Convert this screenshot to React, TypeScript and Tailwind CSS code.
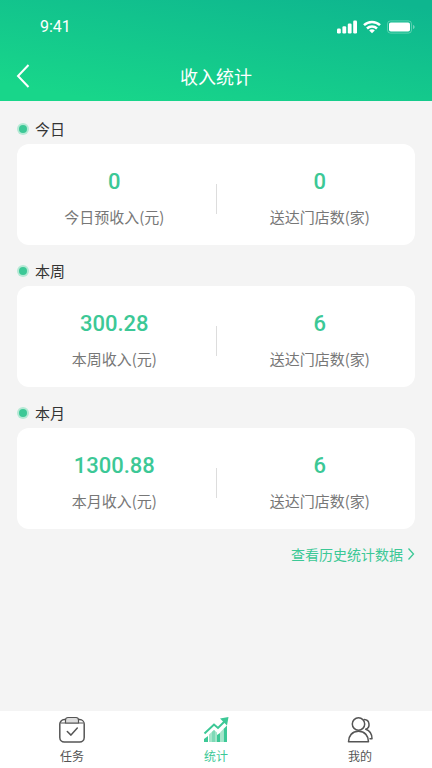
import type { ReactNode } from 'react';

const sections = [
  {
    title: '今日',
    income: '0',
    incomeLabel: '今日预收入(元)',
    stores: '0',
  },
  {
    title: '本周',
    income: '300.28',
    incomeLabel: '本周收入(元)',
    stores: '6',
  },
  {
    title: '本月',
    income: '1300.88',
    incomeLabel: '本月收入(元)',
    stores: '6',
  },
];

function StatusIcons() {
  return (
    <div className="flex items-center gap-[6px] text-white">
      <svg width="20" height="14" viewBox="0 0 20 14" fill="currentColor">
        <rect x="0" y="8.5" width="3.8" height="5" rx="1.2" />
        <rect x="5.4" y="6.3" width="3.8" height="7.2" rx="1.2" />
        <rect x="10.8" y="3.5" width="3.8" height="10" rx="1.2" />
        <rect x="16.2" y="0.5" width="3.8" height="13" rx="1.2" />
      </svg>
      <svg width="18" height="14" viewBox="0 0 18 14" fill="none" stroke="currentColor" strokeWidth="2.5">
        <path d="M1 5.1a11.6 11.6 0 0 1 16 0" />
        <path d="M4 8.5a7.2 7.2 0 0 1 10 0" />
        <path d="M9 13.2 6.2 10.5a3.8 3.8 0 0 1 5.6 0z" fill="currentColor" stroke="none" />
      </svg>
      <svg width="28" height="14" viewBox="0 0 28 14" fill="currentColor">
        <rect x="0.5" y="0.9" width="24" height="12.2" rx="3" fill="none" stroke="currentColor" strokeOpacity="0.3" />
        <rect x="2" y="2.5" width="21" height="9" rx="1.8" />
        <path d="M26 5v4c1-.4 1.6-1.1 1.6-2S27 5.4 26 5z" fillOpacity="0.4" />
      </svg>
    </div>
  );
}

function TaskIcon() {
  return (
    <svg width="28" height="28" viewBox="0 0 28 28" fill="none" stroke="currentColor" strokeWidth="1.5" strokeLinecap="round" strokeLinejoin="round">
      <rect x="1.8" y="3.6" width="24.4" height="22.4" rx="4.5" />
      <path d="M3 7h22" strokeWidth="1" />
      <path d="M7.5 7V4A2.5 2.5 0 0 1 10 1.500h8A2.5 2.5 0 0 1 20.5 4v3z" fill="#dddddd" strokeWidth="1.2" />
      <path d="m9.3 15.5 3.7 3.6 6.3-7" />
    </svg>
  );
}

function StatsIcon() {
  return (
    <svg width="28" height="28" viewBox="0 0 28 28" fill="none">
      <path d="M2 26v-3l4-3v6z" fill="#3cc896" />
      <path d="M7 26v-7.5l5-4.5 3 2.5V26z" fill="#a5e5ca" />
      <path d="M10 26V16l2-2 1 1v11z" fill="#7fd9b7" />
      <path d="M15 26v-7l3-2v9z" fill="#3cc896" />
      <path d="M18 26v-9.5l3-3V26z" fill="#a5e5ca" />
      <path d="M21.5 26V13L25 9.5V26z" fill="#3cc896" />
      <path d="m2.5 17.5 9.500-9 4 3.5 7-7" stroke="#3cc896" strokeWidth="2" />
      <path d="M18 2.5 26.5 1 25 9.5z" fill="#3cc896" />
    </svg>
  );
}

function MineIcon() {
  return (
    <svg width="28" height="28" viewBox="0 0 28 28" fill="none" stroke="currentColor" strokeWidth="1.5" strokeLinecap="round" strokeLinejoin="round">
      <circle cx="12.5" cy="8" r="6.2" />
      <path d="M2.5 25.8c0-5.8 3.6-10.5 10-10.5s10 4.7 10 10.5z" />
      <path d="M18.3 3.5a5 5 0 0 1 1.4 9.7c3.8 1.2 6.300 4.6 6.300 9.6h-2" />
    </svg>
  );
}

function Stat({ value, label }: { value: string; label: string }) {
  return (
    <div className="flex flex-col-reverse items-center gap-[9px]">
      <dt className="text-[15px] leading-6 text-[#777777]">{label}</dt>
      <dd className="font-[Roboto,sans-serif] text-[22px] leading-7 font-medium text-[#3cc896]">{value}</dd>
    </div>
  );
}

function TabItem({ label, active, children }: { label: string; active?: boolean; children: ReactNode }) {
  return (
    <a
      href="#"
      aria-current={active ? 'page' : undefined}
      className={`flex flex-1 flex-col items-center gap-1 ${active ? 'text-[#3cc896]' : 'text-[#555555]'}`}
    >
      {children}
      <span className="text-xs leading-4">{label}</span>
    </a>
  );
}

export default function App() {
  return (
    <div className="flex min-h-screen flex-col bg-[#f4f4f4] font-['Noto_Sans_CJK_SC',sans-serif]">
      <header className="bg-[linear-gradient(10deg,#18d68a_10%,#0eb68f_95%)] text-white">
        <div className="flex h-[52px] items-center justify-between pt-[2px] pr-[17px] pl-10">
          <span className="font-[Roboto,sans-serif] text-base">9:41</span>
          <StatusIcons />
        </div>
        <div className="grid h-[49px] grid-cols-[1fr_auto_1fr] items-center px-4 pb-[2px]">
          <button type="button" aria-label="返回" className="w-4">
            <svg width="14" height="24" viewBox="0 0 14 24" fill="none" stroke="currentColor" strokeWidth="2">
              <path d="M12.5 1 2 12l10.5 11" />
            </svg>
          </button>
          <h1 className="text-lg leading-6">收入统计</h1>
        </div>
      </header>

      <main className="flex flex-1 flex-col gap-[14px] px-[17px] pt-4 pb-6">
        {sections.map((section) => (
          <section key={section.title}>
            <h2 className="mb-[3px] flex items-center gap-[6px] text-[15px] leading-6 text-[#333333]">
              <span className="flex size-3 items-center justify-center rounded-full bg-[#b5e9d5]">
                <span className="size-2 rounded-full bg-[#3cc896]" />
              </span>
              {section.title}
            </h2>
            <dl className="grid grid-cols-[1fr_auto_1fr] items-center rounded-xl bg-white pt-6 pb-4">
              <div className="pr-1">
                <Stat value={section.income} label={section.incomeLabel} />
              </div>
              <div className="h-[30px] w-px bg-[#dddddd]" />
              <div className="pl-2">
                <Stat value={section.stores} label="送达门店数(家)" />
              </div>
            </dl>
          </section>
        ))}

        <a href="#" className="flex items-center gap-1 self-end text-sm leading-[22px] text-[#3cc896]">
          查看历史统计数据
          <svg width="8" height="14" viewBox="0 0 8 14" fill="none" stroke="currentColor" strokeWidth="1.3">
            <path d="m1.5 1.5 5 5.5-5 5.5" />
          </svg>
        </a>
      </main>

      <nav className="flex bg-white pt-[5px] pb-1">
        <TabItem label="任务">
          <TaskIcon />
        </TabItem>
        <TabItem label="统计" active>
          <StatsIcon />
        </TabItem>
        <TabItem label="我的">
          <MineIcon />
        </TabItem>
      </nav>
    </div>
  );
}
